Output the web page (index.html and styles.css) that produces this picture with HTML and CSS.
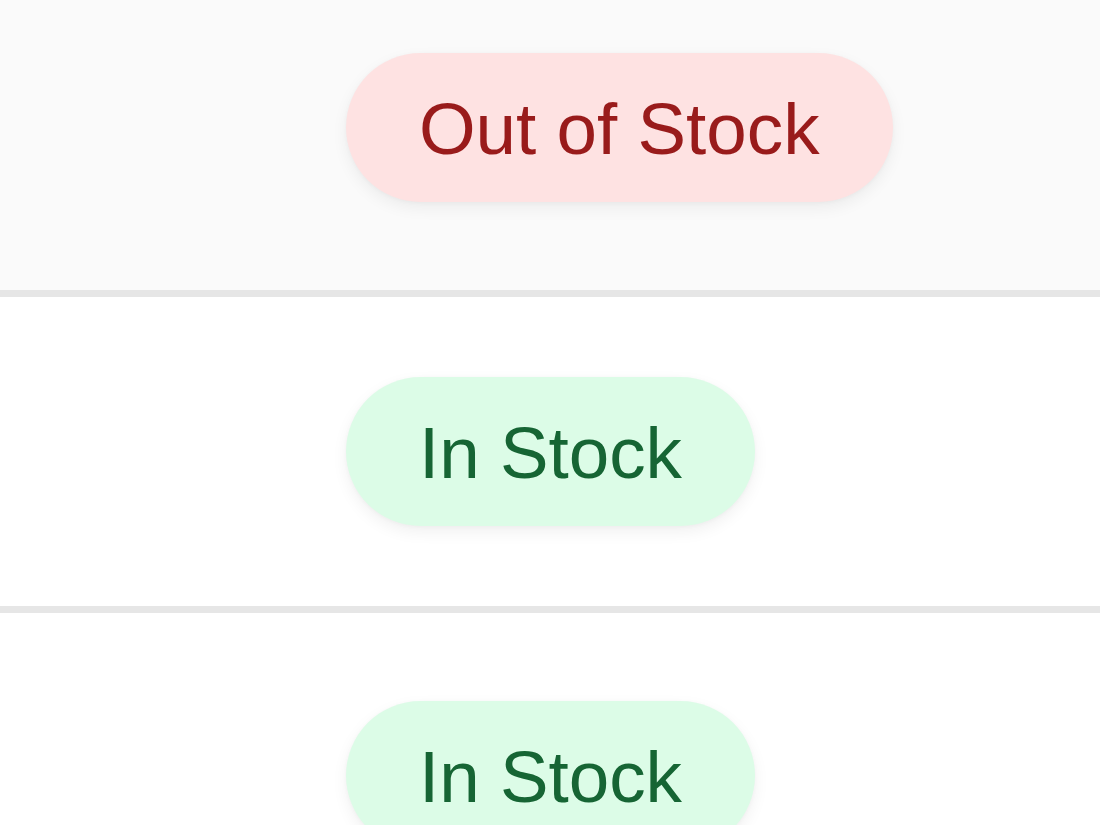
FILE: index.html
```html
<!DOCTYPE html>
<html lang="en">
<head>
<meta charset="utf-8">
<title>Stock status</title>
<link rel="stylesheet" href="styles.css">
</head>
<body>
  <div class="table">
    <div class="row row-first row-alt">
      <div class="cell cell-lead"></div>
      <div class="cell cell-status"><span class="badge badge-out">Out of Stock</span></div>
      <div class="cell cell-trail"></div>
    </div>
    <div class="row row-mid">
      <div class="cell cell-lead"></div>
      <div class="cell cell-status"><span class="badge badge-in">In Stock</span></div>
      <div class="cell cell-trail"></div>
    </div>
    <div class="row row-last">
      <div class="cell cell-lead"></div>
      <div class="cell cell-status"><span class="badge badge-in">In Stock</span></div>
      <div class="cell cell-trail"></div>
    </div>
  </div>
</body>
</html>
```

FILE: styles.css
```css
html, body {
  margin: 0;
  padding: 0;
  background: #ffffff;
}

body {
  width: 1100px;
  height: 825px;
  overflow: hidden;
  font-family: "Liberation Sans", Arial, sans-serif;
}

.table {
  display: flex;
  flex-direction: column;
  width: 1100px;
}

.row {
  display: flex;
  align-items: flex-start;
  border-bottom: 7px solid #e6e6e6;
  background: #ffffff;
}

.row-alt {
  background: #fafafa;
}

.row-first {
  padding: 53px 0 88px;
}

.row-mid {
  padding: 80px 0 80px;
}

.row-last {
  padding: 88px 0 80px;
  border-bottom: none;
}

.cell-lead {
  width: 251px;
  flex: none;
}

.cell-status {
  flex: 1;
  padding-left: 95px;
  display: flex;
}

.cell-trail {
  width: 32px;
  flex: none;
}

.badge {
  display: inline-block;
  font-size: 72.8px;
  line-height: 85px;
  padding: 33px 73px 31px;
  border-radius: 9999px;
  white-space: nowrap;
  box-shadow: 0 6px 16px rgba(0, 0, 0, 0.06), 0 1px 4px rgba(0, 0, 0, 0.03);
}

.badge-out {
  background: #fee2e2;
  color: #991b1b;
}

.badge-in {
  background: #dcfce7;
  color: #166534;
}
```
